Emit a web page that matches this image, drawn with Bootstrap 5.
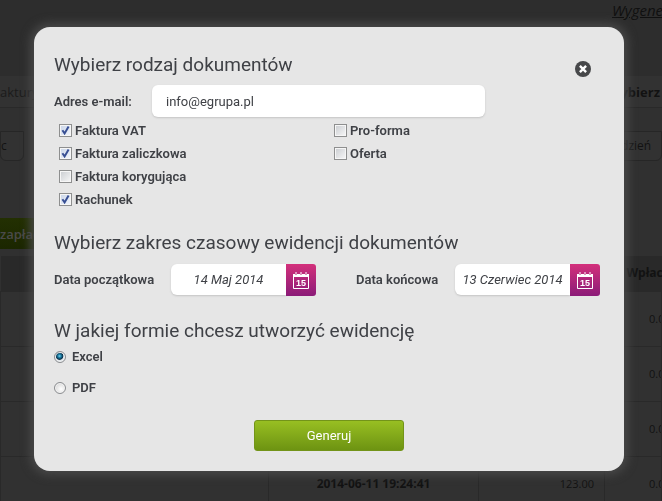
<!DOCTYPE html>
<html lang="pl">
<head>
<meta charset="utf-8">
<meta name="viewport" content="width=device-width, initial-scale=1">
<title>Ewidencja dokumentów</title>
<link href="https://cdn.jsdelivr.net/npm/bootstrap@5.3.0/dist/css/bootstrap.min.css" rel="stylesheet">
<style>
body { background: #303030; color: #121212; font: 13px/20px "Open Sans", "Noto Sans", sans-serif; overflow: hidden; }
.page-bg { height: 100vh; overflow: hidden; white-space: nowrap; }
.top-line { height: 76px; background: #2d2d2d; }
.top-line a { color: #101010; font-size: 15px; font-style: italic; width: 50px; }
.kind-line { height: 32px; background: #323232; border-bottom: 1px solid #292929; padding-right: 2px; }
.kind-line span { color: #1b1b1b; }
.tab-line { height: 30px; margin-top: 23px; }
.tab-line button { color: #121212; background: #323232; border: 1px solid #262626; border-radius: 0 0 6px 6px; font-size: 12px; }
.tab-first { width: 24px; }
.tab-last { width: 62px; }
.pay-btn { height: 31px; margin-top: 57px; width: 60px; background: linear-gradient(#233002, #1b2600); color: #4a4a4a; border: 0; font-weight: 600; }
.doc-table { table-layout: fixed; font: 11px/18px "Open Sans", sans-serif; margin-top: 7px; color: #121212; }
.doc-table b, .doc-table th { font-size: 12px; }
.doc-table th { height: 35px; background: #292929; }
.doc-table td { height: 55px; border: 1px solid #292929; background: #313131; }
.doc-table th, .doc-table td { vertical-align: middle; overflow: hidden; padding: 0 10px; }
.doc-table .c-name { width: 268px; }
.doc-table .c-date { width: 210px; }
.doc-table .c-sum { width: 126px; }
.doc-table th.c-paid { padding: 0 0 0 22px; }
.doc-table td.c-paid { padding: 0 0 0 44px; }
.shade { position: fixed; inset: 0; padding: 27px 38px 30px 34px; }
.dialog-panel { background: #e6e6e6; border-radius: 16px; box-shadow: 0 0 10px 4px #484848; color: #3f4146; padding: 24px 20px 20px; font: 13px/23px Roboto, "Open Sans", sans-serif; }
.dialog-panel h2 { font-size: 19px; line-height: 28px; font-weight: 400; margin: 0; }
.dialog-panel label { font-weight: 600; }
.dialog-panel .range-title { margin-top: 18px; }
.dialog-panel .form-title { margin-top: 21px; }
.close-btn { width: 16px; height: 16px; margin: 10px 13px 0 0; }
.field { border: 0; background: #fff; color: #3f4146; border-radius: 6px; box-shadow: 0 1px 2px #c4c4c4; height: 32px; min-width: 0; }
.mail-row { margin: 6px 0 2px; }
.mail-label { width: 98px; }
.mail-field { width: 333px; padding: 0 14px; }
.date-row { margin-top: 7px; }
.from-label { width: 117px; }
.to-label { width: 99px; }
.date-gap { margin-left: 40px; }
.date-field { width: 115px; border-radius: 6px 0 0 6px; font-style: italic; text-align: center; padding: 0; height: 31px; }
.cal-btn { width: 30px; height: 32px; border-radius: 0 3px 3px 0; background: linear-gradient(#d3307b, #8b1b78); }
.kinds { padding-left: 5px; }
.kinds > div { gap: 3px; }
.tick { appearance: none; width: 13px; height: 13px; margin: 0; border: 1px solid #8e8f8f; outline: 1px solid #f6f6f6; outline-offset: -2px; background: linear-gradient(135deg, #c9ccd0, #f8f8f8); flex: none; }
.tick:checked { background: url("data:image/svg+xml,%3Csvg xmlns='http://www.w3.org/2000/svg' viewBox='0 0 11 11'%3E%3Cpath d='M2.4 5.2 4.6 8.4 8.6 1.6' fill='none' stroke='%23384f93' stroke-width='2'/%3E%3C/svg%3E"), linear-gradient(135deg, #c8d4e8, #f4f7fc); }
.choice { gap: 6px; }
.dot { appearance: none; width: 12px; height: 12px; margin: 0; border: 1px solid #8b8d90; border-radius: 50%; background: radial-gradient(circle at 60% 60%, #fff, #ccc); box-shadow: inset 0 0 0 1px #f4f4f4; flex: none; }
.dot:checked { background: radial-gradient(circle at 45% 40%, #7fd6f0 0, #1b7fa5 20%, #0b2f48 42%, #dfe5ea 52%); }
.make-row { margin-top: 21px; }
.make-btn { width: 150px; height: 31px; border: 1px solid #739419; border-radius: 3px; background: linear-gradient(#98bf22, #6d9312); color: #fff; }
</style>
<script src="https://cdn.jsdelivr.net/npm/bootstrap@5.3.0/dist/js/bootstrap.bundle.min.js"></script>
</head>
<body>
<div class="page-bg">
  <div class="top-line d-flex justify-content-end"><a href="#">Wygeneruj</a></div>
  <div class="kind-line d-flex justify-content-between align-items-center"><span>aktury</span><b>Wybierz</b></div>
  <div class="tab-line d-flex justify-content-between">
    <button type="button" class="tab-first text-start p-0">c</button>
    <button type="button" class="tab-last p-0">tydzień</button>
  </div>
  <button type="button" class="pay-btn d-block p-0 text-start">zapłać</button>
  <table class="doc-table w-100">
    <thead><tr><th class="c-name"></th><th class="c-date"></th><th class="c-sum"></th><th class="c-paid">Wpłac</th></tr></thead>
    <tbody>
      <tr><td></td><td></td><td></td><td class="c-paid">0.0</td></tr>
      <tr><td></td><td></td><td></td><td class="c-paid">0.0</td></tr>
      <tr><td></td><td></td><td></td><td class="c-paid">0.0</td></tr>
      <tr><td></td><td class="text-center"><b>2014-06-11 19:24:41</b></td><td class="text-end">123.00</td><td class="c-paid">0.0</td></tr>
    </tbody>
  </table>
</div>

<div class="shade">
  <form class="dialog-panel" role="dialog" aria-labelledby="kind-title">
    <div class="d-flex justify-content-between">
      <h2 id="kind-title">Wybierz rodzaj dokumentów</h2>
      <button type="button" class="close-btn border-0 bg-transparent p-0 d-flex" aria-label="Zamknij">
        <svg width="16" height="16" viewBox="0 0 16 16" class="flex-shrink-0"><circle cx="8" cy="8" r="8" fill="#47484a"/><path d="M4.9 4.9l6.2 6.2M11.1 4.9l-6.2 6.2" stroke="#fff" stroke-width="2.4"/></svg>
      </button>
    </div>
    <div class="mail-row d-flex align-items-center">
      <label class="mail-label" for="mail">Adres e-mail:</label>
      <input class="field mail-field" id="mail" type="email" value="info@egrupa.pl">
    </div>
    <div class="row g-0">
      <div class="kinds col-6">
        <div class="d-flex align-items-center"><input class="tick" type="checkbox" id="k1" checked><label for="k1">Faktura VAT</label></div>
        <div class="d-flex align-items-center"><input class="tick" type="checkbox" id="k2" checked><label for="k2">Faktura zaliczkowa</label></div>
        <div class="d-flex align-items-center"><input class="tick" type="checkbox" id="k3"><label for="k3">Faktura korygująca</label></div>
        <div class="d-flex align-items-center"><input class="tick" type="checkbox" id="k4" checked><label for="k4">Rachunek</label></div>
      </div>
      <div class="kinds col-6">
        <div class="d-flex align-items-center"><input class="tick" type="checkbox" id="k5"><label for="k5">Pro-forma</label></div>
        <div class="d-flex align-items-center"><input class="tick" type="checkbox" id="k6"><label for="k6">Oferta</label></div>
      </div>
    </div>
    <h2 class="range-title">Wybierz zakres czasowy ewidencji dokumentów</h2>
    <div class="date-row d-flex">
      <label class="from-label pt-1" for="from">Data początkowa</label>
      <input class="field date-field" id="from" type="text" value="14 Maj 2014">
      <button type="button" class="cal-btn border-0 p-0" aria-label="Wybierz datę początkową">
        <svg width="16" height="17" viewBox="0 0 16 17" class="d-block mx-auto"><path d="M.5 3.5h15v13H.5z" fill="none" stroke="#fff"/><path d="M0 2h2v2h2V2h3v2h2V2h3v2h2V2h2v3H0z" fill="#fff"/><path d="M3 0v3M8 0v3M13 0v3" stroke="#fff"/><text x="8" y="14" font-family="Liberation Sans, sans-serif" font-size="9" font-weight="700" fill="#fff" text-anchor="middle">15</text></svg>
      </button>
      <label class="to-label date-gap pt-1" for="to">Data końcowa</label>
      <input class="field date-field" id="to" type="text" value="13 Czerwiec 2014">
      <button type="button" class="cal-btn border-0 p-0" aria-label="Wybierz datę końcową">
        <svg width="16" height="17" viewBox="0 0 16 17" class="d-block mx-auto"><path d="M.5 3.5h15v13H.5z" fill="none" stroke="#fff"/><path d="M0 2h2v2h2V2h3v2h2V2h3v2h2V2h2v3H0z" fill="#fff"/><path d="M3 0v3M8 0v3M13 0v3" stroke="#fff"/><text x="8" y="14" font-family="Liberation Sans, sans-serif" font-size="9" font-weight="700" fill="#fff" text-anchor="middle">15</text></svg>
      </button>
    </div>
    <h2 class="form-title">W jakiej formie chcesz utworzyć ewidencję</h2>
    <div class="choice d-flex align-items-center mb-2"><input class="dot" type="radio" name="form" id="f1" checked><label for="f1">Excel</label></div>
    <div class="choice d-flex align-items-center"><input class="dot" type="radio" name="form" id="f2"><label for="f2">PDF</label></div>
    <div class="make-row d-flex justify-content-center"><button type="button" class="make-btn p-0">Generuj</button></div>
  </form>
</div>
</body>
</html>
